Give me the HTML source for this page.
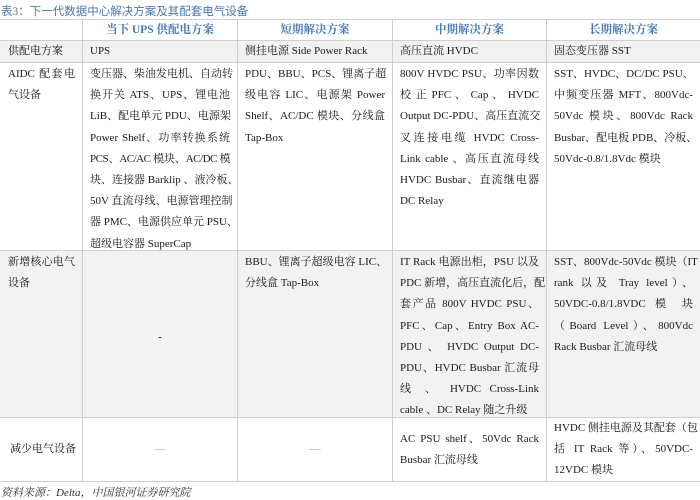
<!DOCTYPE html>
<html><head><meta charset="utf-8"><style>
*{margin:0;padding:0;box-sizing:border-box}
body{width:700px;height:498px;background:#fff;font-family:"Liberation Serif","Noto Serif CJK SC",serif;font-size:11px;color:#1a1a1a;position:relative;overflow:hidden}
.t{position:absolute;left:1px;top:3px;color:#4a78b0;font-size:11.5px;font-family:"Liberation Serif","Noto Sans CJK SC",sans-serif}
.h{position:absolute;height:1px;background:#cfcfcf;left:0;width:700px}
.v{position:absolute;width:1px;background:#cfcfcf}
.g{position:absolute;background:#f2f2f2;left:0;width:700px}
.c{position:absolute;line-height:21.2px}
.c div{text-align:justify;text-align-last:justify;white-space:nowrap}
.c div.l{text-align-last:left}
.hd{position:absolute;top:20px;color:#4a78b0;font-weight:bold;text-align:center;line-height:20px;font-size:11.5px}
.ft{position:absolute;left:1px;top:484px;font-style:italic;font-size:11px;color:#333}
</style></head><body>
<div class="t">表3：下一代数据中心解决方案及其配套电气设备</div>
<div class="g" style="top:40px;height:22px"></div>
<div class="g" style="top:250px;height:167px"></div>
<div class="h" style="top:19px"></div>
<div class="h" style="top:40px"></div>
<div class="h" style="top:62px"></div>
<div class="h" style="top:250px"></div>
<div class="h" style="top:417px"></div>
<div class="h" style="top:481px"></div>
<div class="v" style="left:82px;top:19px;height:462px"></div>
<div class="v" style="left:237px;top:19px;height:462px"></div>
<div class="v" style="left:392px;top:19px;height:462px"></div>
<div class="v" style="left:546px;top:19px;height:462px"></div>

<div class="hd" style="left:83px;width:154px">当下 UPS 供配电方案</div>
<div class="hd" style="left:238px;width:154px">短期解决方案</div>
<div class="hd" style="left:393px;width:153px">中期解决方案</div>
<div class="hd" style="left:547px;width:153px">长期解决方案</div>

<div class="c" style="left:8px;top:41px"><div class="l">供配电方案</div></div>
<div class="c" style="left:90px;top:41px"><div class="l">UPS</div></div>
<div class="c" style="left:245px;top:41px"><div class="l">侧挂电源 Side Power Rack</div></div>
<div class="c" style="left:400px;top:41px"><div class="l">高压直流 HVDC</div></div>
<div class="c" style="left:554px;top:41px"><div class="l">固态变压器 SST</div></div>

<div class="c" style="left:8px;top:64px;width:67px"><div>AIDC 配套电</div><div class="l">气设备</div></div>
<div class="c" style="left:90px;top:64px;width:140px">
<div>变压器、柴油发电机、自动转</div><div>换开关 ATS、UPS、锂电池</div><div>LiB、配电单元 PDU、电源架</div><div>Power Shelf、功率转换系统</div><div style="letter-spacing:-0.5px">PCS、AC/AC 模块、AC/DC 模</div><div>块、连接器 Barklip 、液冷板、</div><div>50V 直流母线、电源管理控制</div><div>器 PMC、电源供应单元 PSU、</div><div class="l">超级电容器 SuperCap</div></div>
<div class="c" style="left:245px;top:64px;width:140px">
<div>PDU、BBU、PCS、锂离子超</div><div>级电容 LIC、电源架 Power</div><div>Shelf、AC/DC 模块、分线盒</div><div class="l">Tap-Box</div></div>
<div class="c" style="left:400px;top:64px;width:139px">
<div>800V HVDC PSU、功率因数</div><div>校 正 PFC 、 Cap 、 HVDC</div><div>Output DC-PDU、高压直流交</div><div>叉连接电缆 HVDC Cross-</div><div>Link cable 、高压直流母线</div><div>HVDC Busbar、直流继电器</div><div class="l">DC Relay</div></div>
<div class="c" style="left:554px;top:64px;width:139px">
<div>SST、HVDC、DC/DC PSU、</div><div>中频变压器 MFT、800Vdc-</div><div>50Vdc 模块、800Vdc Rack</div><div>Busbar、配电板 PDB、冷板、</div><div class="l">50Vdc-0.8/1.8Vdc 模块</div></div>

<div class="c" style="left:8px;top:252px;width:67px"><div>新增核心电气</div><div class="l">设备</div></div>
<div class="c" style="left:83px;top:327px;width:154px;text-align:center"><span>-</span></div>
<div class="c" style="left:245px;top:252px;width:140px"><div class="l">BBU、锂离子超级电容 LIC、</div><div class="l">分线盒 Tap-Box</div></div>
<div class="c" style="left:400px;top:252px;width:139px">
<div>IT Rack 电源出柜，PSU 以及</div><div>PDC 新增，高压直流化后，配</div><div>套产品 800V HVDC PSU、</div><div>PFC、Cap、Entry Box AC-</div><div>PDU 、 HVDC Output DC-</div><div>PDU、HVDC Busbar 汇流母</div><div>线 、 HVDC Cross-Link</div><div class="l">cable 、DC Relay 随之升级</div></div>
<div class="c" style="left:554px;top:252px;width:139px">
<div>SST、800Vdc-50Vdc 模块（IT</div><div>rank 以及 Tray level）、</div><div>50VDC-0.8/1.8VDC 模 块</div><div>（Board Level）、800Vdc</div><div class="l">Rack Busbar 汇流母线</div></div>

<div class="c" style="left:10px;top:439px"><div class="l">减少电气设备</div></div>
<div class="c" style="left:83px;top:439px;width:154px;text-align:center;color:#999">—</div>
<div class="c" style="left:238px;top:439px;width:154px;text-align:center;color:#999">—</div>
<div class="c" style="left:400px;top:429px;width:139px"><div>AC PSU shelf、50Vdc Rack</div><div class="l">Busbar 汇流母线</div></div>
<div class="c" style="left:554px;top:418px;width:139px"><div>HVDC 侧挂电源及其配套（包</div><div>括 IT Rack 等）、50VDC-</div><div class="l">12VDC 模块</div></div>

<div class="ft">资料来源：Delta，中国银河证券研究院</div>
</body></html>
